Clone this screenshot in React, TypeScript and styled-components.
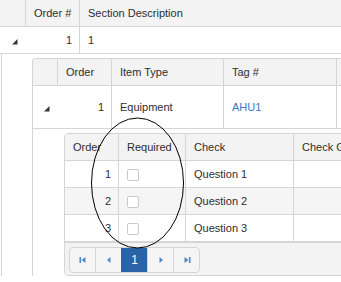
import React from "react";
import styled, { createGlobalStyle } from "styled-components";

const BORDER = "#d5d5d5";

const GlobalStyle = createGlobalStyle`
  html, body { margin: 0; padding: 0; background: #fff; }
  body {
    font-family: "Liberation Sans", Arial, sans-serif;
    font-size: 11px;
    color: #2e2e2e;
  }
`;

const Viewport = styled.div`
  position: relative;
  width: 341px;
  height: 282px;
  overflow: hidden;
  background: #fff;
`;

const Table = styled.table<{ $w: number }>`
  width: ${(p) => p.$w}px;
  table-layout: fixed;
  border-collapse: separate;
  border-spacing: 0;
`;

const Th = styled.th<{ $w?: number; $first?: boolean }>`
  box-sizing: border-box;
  width: ${(p) => (p.$w ? `${p.$w}px` : "auto")};
  background: #f3f3f3;
  font-weight: normal;
  text-align: left;
  padding: 0 8px;
  line-height: 26px;
  white-space: nowrap;
  overflow: hidden;
  border-bottom: 1px solid ${BORDER};
  border-left: ${(p) => (p.$first ? "0" : `1px solid ${BORDER}`)};
`;

const Td = styled.td<{ $h?: number; $noLeft?: boolean; $right?: boolean; $alt?: boolean }>`
  box-sizing: border-box;
  padding: 0 7px 0 8px;
  line-height: ${(p) => p.$h ?? 26}px;
  text-align: ${(p) => (p.$right ? "right" : "left")};
  white-space: nowrap;
  overflow: hidden;
  background: ${(p) => (p.$alt ? "#f5f5f5" : "transparent")};
  border-bottom: 1px solid ${BORDER};
  border-left: ${(p) => (p.$noLeft ? "0" : `1px solid ${BORDER}`)};
`;

const HierCell = styled.td<{ $h?: number }>`
  padding: 0;
  line-height: ${(p) => p.$h ?? 26}px;
  border-bottom: 1px solid ${BORDER};
  text-align: center;
`;

const DetailHierCell = styled.td<{ $line?: boolean }>`
  padding: 0;
  vertical-align: top;
  background: ${(p) =>
    p.$line
      ? `linear-gradient(to right, transparent 1px, ${BORDER} 1px, ${BORDER} 2px, transparent 2px)`
      : "transparent"};
`;

const DetailCell = styled.td<{ $pl: number }>`
  padding: 4px 0 0 ${(p) => p.$pl}px;
  vertical-align: top;
`;

const NestedFrame = styled.div`
  border-top: 1px solid ${BORDER};
  border-left: 1px solid ${BORDER};
  border-top-left-radius: 4px;
  overflow: hidden;
`;

const InnerFrame = styled.div`
  width: 320px;
  border: 1px solid ${BORDER};
  border-radius: 4px;
  overflow: hidden;
`;

const Link = styled.a`
  color: #3b78c3;
  text-decoration: none;
`;

const Checkbox = styled.span`
  display: inline-block;
  box-sizing: border-box;
  width: 12px;
  height: 12px;
  border: 1px solid #c9c9c9;
  border-radius: 2px;
  background: #fff;
  vertical-align: middle;
`;

const Pager = styled.div`
  display: flex;
  align-items: center;
  padding: 4px 4px 2px;
  background: #f3f3f3;
  border-top: 1px solid ${BORDER};
`;

const ButtonGroup = styled.div`
  display: flex;
  border: 1px solid ${BORDER};
  border-radius: 4px;
  overflow: hidden;
  background: #f5f5f5;
`;

const PageButton = styled.span<{ $active?: boolean; $first?: boolean }>`
  box-sizing: border-box;
  display: flex;
  align-items: center;
  justify-content: center;
  width: ${(p) => (p.$first ? 25 : 26)}px;
  height: 24px;
  border-left: ${(p) => (p.$first ? "0" : `1px solid ${p.$active ? "#2b63a8" : BORDER}`)};
  background: ${(p) => (p.$active ? "#2b63a8" : "transparent")};
  color: ${(p) => (p.$active ? "#fff" : "#2e2e2e")};
  font-size: 12px;
`;

const IconBox = styled.svg`
  display: inline-block;
  vertical-align: middle;
`;

const Annotation = styled.svg`
  position: absolute;
  left: 90px;
  top: 116px;
  pointer-events: none;
`;

const Collapse = () => (
  <IconBox width="16" height="16" viewBox="0 0 16 16">
    <polygon points="12.5,6 12.5,11.5 7,11.5" fill="#2f3640" />
  </IconBox>
);

const PAGER_BLUE = "#4f88c7";

const SeekW = () => (
  <IconBox width="10" height="10" viewBox="0 0 10 10">
    <rect x="1.5" y="2" width="1.6" height="6" fill={PAGER_BLUE} />
    <polygon points="7.5,2 7.5,8 3.5,5" fill={PAGER_BLUE} />
  </IconBox>
);
const ArrowW = () => (
  <IconBox width="10" height="10" viewBox="0 0 10 10">
    <polygon points="6.5,2 6.5,8 3,5" fill={PAGER_BLUE} />
  </IconBox>
);
const ArrowE = () => (
  <IconBox width="10" height="10" viewBox="0 0 10 10">
    <polygon points="3.5,2 3.5,8 7,5" fill={PAGER_BLUE} />
  </IconBox>
);
const SeekE = () => (
  <IconBox width="10" height="10" viewBox="0 0 10 10">
    <polygon points="2.5,2 2.5,8 6.5,5" fill={PAGER_BLUE} />
    <rect x="6.9" y="2" width="1.6" height="6" fill={PAGER_BLUE} />
  </IconBox>
);

const checks = [1, 2, 3];

const InnerGrid = () => (
  <InnerFrame>
    <Table $w={318}>
      <thead>
        <tr>
          <Th $w={53} $first>Order</Th>
          <Th $w={67}>Required</Th>
          <Th $w={108}>Check</Th>
          <Th>Check Group</Th>
        </tr>
      </thead>
      <tbody>
        {checks.map((n) => (
          <tr key={n}>
            <Td $noLeft $right $alt={n === 2}>{n}</Td>
            <Td $alt={n === 2}><Checkbox /></Td>
            <Td $alt={n === 2}>Question {n}</Td>
            <Td $alt={n === 2}></Td>
          </tr>
        ))}
      </tbody>
    </Table>
    <Pager>
      <ButtonGroup>
        <PageButton $first><SeekW /></PageButton>
        <PageButton><ArrowW /></PageButton>
        <PageButton $active>1</PageButton>
        <PageButton><ArrowE /></PageButton>
        <PageButton><SeekE /></PageButton>
      </ButtonGroup>
    </Pager>
  </InnerFrame>
);

const NestedGrid = () => (
  <NestedFrame>
    <Table $w={410}>
      <thead>
        <tr>
          <Th $w={24} $first></Th>
          <Th $w={54}>Order</Th>
          <Th $w={112}>Item Type</Th>
          <Th $w={113}>Tag #</Th>
          <Th></Th>
        </tr>
      </thead>
      <tbody>
        <tr>
          <HierCell $h={42}><Collapse /></HierCell>
          <Td $h={42} $noLeft $right>1</Td>
          <Td $h={42}>Equipment</Td>
          <Td $h={42}><Link href="#">AHU1</Link></Td>
          <Td $h={42}></Td>
        </tr>
        <tr>
          <DetailHierCell />
          <DetailCell colSpan={4} $pl={7}>
            <InnerGrid />
          </DetailCell>
        </tr>
      </tbody>
    </Table>
  </NestedFrame>
);

export default function App() {
  return (
    <Viewport>
      <GlobalStyle />
      <Table $w={440}>
        <thead>
          <tr>
            <Th $w={25} $first></Th>
            <Th $w={54}>Order #</Th>
            <Th>Section Description</Th>
          </tr>
        </thead>
        <tbody>
          <tr>
            <HierCell><Collapse /></HierCell>
            <Td $noLeft $right>1</Td>
            <Td>1</Td>
          </tr>
          <tr>
            <DetailHierCell $line />
            <DetailCell colSpan={2} $pl={7}>
              <NestedGrid />
            </DetailCell>
          </tr>
        </tbody>
      </Table>
      <Annotation width="96" height="136" viewBox="0 0 96 136">
        <ellipse cx="47.5" cy="67" rx="46" ry="65" fill="none" stroke="#000" strokeWidth="1" />
      </Annotation>
    </Viewport>
  );
}
